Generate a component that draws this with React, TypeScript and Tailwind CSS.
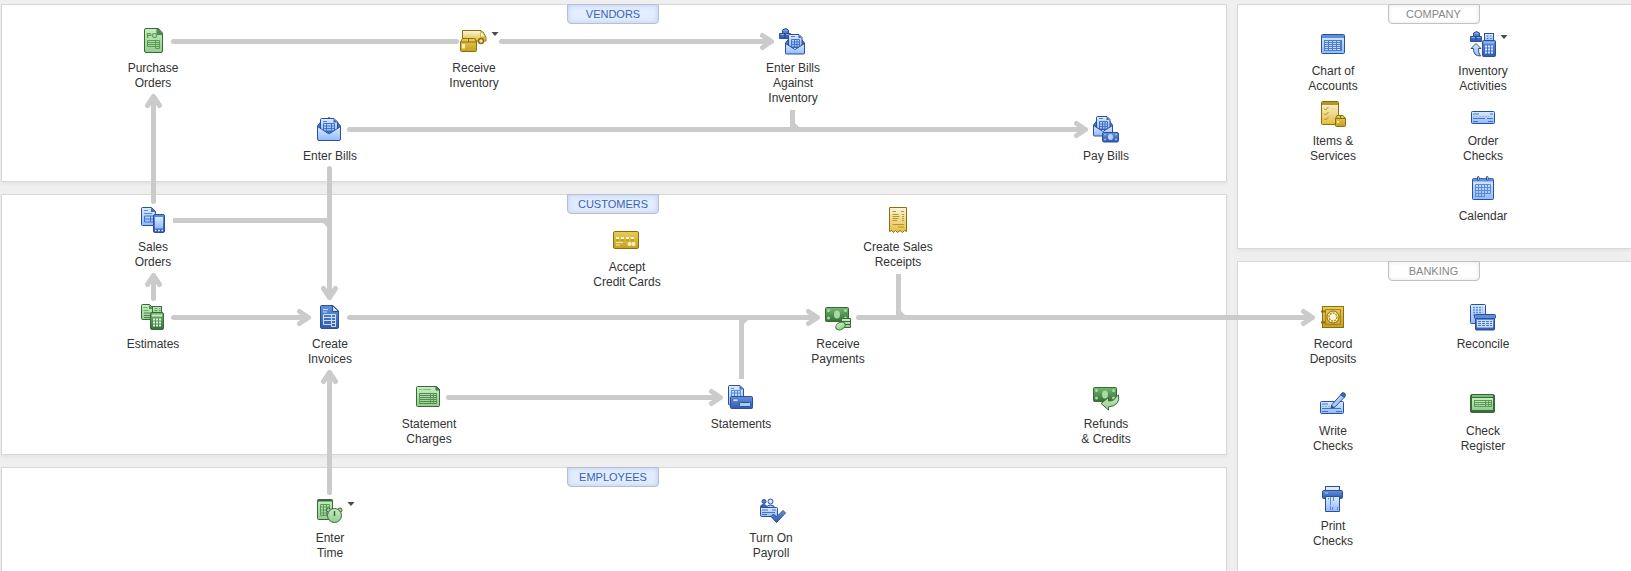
/**
 * @file Home page workflow board
 * @description Panels with task shortcuts and the arrows that join them
 */

import type { ReactNode } from 'react';
import { clsx } from 'clsx';

// outline colours of the three icon families
const BLUE = '#2f4f95';
const GREEN = '#3b683a';
const GOLD = '#8c6d0f';

/**
 * Shared gradients, referenced by id from every icon
 */
function IconGradients() {
  const gradients = [
    { id: 'blueLight', from: '#deebff', to: '#8fbaff' },
    { id: 'blueDark', from: '#5f93dc', to: '#3059b4' },
    { id: 'greenLight', from: '#c9edc4', to: '#93cc8e' },
    { id: 'greenDark', from: '#74b870', to: '#356f36' },
    { id: 'goldLight', from: '#fcf5da', to: '#e3bf3f' },
    { id: 'goldDark', from: '#e8cd58', to: '#c7a01f' },
  ];

  return (
    <defs>
      {gradients.map(({ id, from, to }) => (
        <linearGradient key={id} id={id} x1="0" y1="0" x2="0" y2="1">
          <stop offset="0" stopColor={from} />
          <stop offset="1" stopColor={to} />
        </linearGradient>
      ))}
    </defs>
  );
}

/* ---------- icons, all drawn on a 28 x 28 grid ---------- */

const purchaseOrders = (
  <g>
    <path d="M7 .5h12.5l4 4.5v18q0 1.5-1.5 1.5H7q-1.5 0-1.5-1.5V2Q5.5 .5 7 .5z" fill="url(#greenLight)" stroke={GREEN} />
    <path d="M17.5 1h2l4 4.5v1.5h-6z" fill="#4f8a4c" />
    <text x="7.5" y="10" fontSize="7.5" fontWeight="700" fill="#4d9249" fontFamily="Liberation Sans, Arial, sans-serif">PO</text>
    <path d="M8.5 12.5h12v8h-4v-2h-8zM8.5 14.5h12M8.5 16.5h12M16.5 12.5v6M16.5 18.500h4" fill="none" stroke="#5a9a56" />
  </g>
);

const receiveInventory = (
  <g>
    <path d="M2.5 2.5h18.5v1.5h2l3 5.5v3.5h-23.5z" fill="url(#goldLight)" stroke={GOLD} />
    <path d="M20 4.500h3l2.500 5v3h-5.500z" fill="#d9b634" />
    <path d="M21 5h1.500l1.500 3.500h-3z" fill="#fdf6dc" />
    <circle cx="21" cy="13" r="2.500" fill="#f5e7a8" stroke={GOLD} strokeWidth="1.500" />
    <path d="M2.5 10.500h12.500l1.500 3.500v8.500q0 1-1 1h-14q-1 0-1-1v-8.500z" fill="url(#goldDark)" stroke={GOLD} />
    <path d="M.5 14h16M8.500 10.500v3.500" fill="none" stroke={GOLD} />
    <rect x="2" y="16" width="3" height="4.500" fill="#f8edbf" />
  </g>
);

// open envelope with a bill inside; shared by the two small bill icons
const openEnvelope = (
  <g>
    <path d="M.5 9l3.5-4.5h12l3.5 4.5v3h-19z" fill="url(#blueDark)" stroke={BLUE} />
    <path d="M3.500 1.500q0-1 1-1h9.500l3 3v10h-13.500z" fill="url(#blueLight)" stroke={BLUE} />
    <path d="M13.5 .5l3 3.500h-3z" fill="#3c66b8" />
    <path d="M6 2.5h4" stroke="#4f7fd0" />
    <path d="M6.5 5.5h8v7.500h-8zM6.500 8h8M6.500 10.500h8M9.500 5.500v7.500M12 5.500v7.500" fill="none" stroke="#4373cb" />
    <path d="M.5 9.500l9.500 6 9.500-6v9.500q0 1-1 1h-17q-1 0-1-1z" fill="url(#blueLight)" stroke={BLUE} />
  </g>
);

const cubes = (
  <g>
    <path d="M3.500 2l3-1.500 3 1.500v3.500h-6zM.5 5.500h5.500v5h-5.500zM6 5.500h5.500v5h-5.500z" fill="url(#blueDark)" stroke={BLUE} />
    <path d="M4.500 2.500h4M1.500 6.500h3.500M7 6.500h3.500" stroke="#86aee8" />
  </g>
);

const enterBillsAgainst = (
  <g>
    {cubes}
    <g transform="translate(6 6)">{openEnvelope}</g>
  </g>
);

const enterBills = (
  <g>
    <path d="M1.5 10l4-5h15l4 5v4h-23z" fill="url(#blueDark)" stroke={BLUE} />
    <circle cx="13" cy="2.5" r="1.5" fill="#3c66b8" />
    <path d="M4.5 3.5q0-1 1-1h12.500l3.500 3.500v9.500h-17z" fill="url(#blueLight)" stroke={BLUE} />
    <path d="M17.5 2.5l3.500 4h-3.500z" fill="#3c66b8" />
    <path d="M7 5.5h4" stroke="#4f7fd0" />
    <path d="M7.5 7.5h11v9h-11zM7.500 10h11M7.500 12.500h11M7.500 15h11M10.500 7.500v9M15.500 7.500v9" fill="none" stroke="#4373cb" />
    <path d="M1.5 10.5l11.5 7.500 11.500-7.500v12.500q0 1.500-1.500 1.500h-20q-1.500 0-1.500-1.500z" fill="url(#blueLight)" stroke={BLUE} />
  </g>
);

const payBills = (
  <g>
    <g transform="translate(1 0)">{openEnvelope}</g>
    <rect x="10.5" y="16.5" width="16" height="9.5" rx="1.5" fill="url(#blueDark)" stroke={BLUE} />
    <ellipse cx="18.5" cy="21" rx="2.5" ry="3" fill="#b9d3ff" />
    <path d="M12 18.5h2M12 23.5h2M23 18.5h2M23 23.5h2" stroke="#8fb6f5" strokeWidth="1.5" />
  </g>
);

const salesOrders = (
  <g>
    <path d="M3.5 .5h9l4 4v14h-13q-1 0-1-1v-16q0-1 1-1z" fill="url(#blueLight)" stroke={BLUE} />
    <path d="M12 .5l4.5 4.5h-4.5z" fill="#3f6cc4" />
    <path d="M5 3.5h4M5 6.5h8" stroke="#5b8bd8" />
    <path d="M5.5 9h9v6h-9zM5.5 12h9M11.5 9v6" fill="none" stroke="#4373cb" />
    <rect x="14.5" y="7.5" width="11" height="18" rx="1.5" fill="url(#blueDark)" stroke={BLUE} />
    <rect x="16" y="10" width="8" height="11.5" fill="url(#blueLight)" />
    <path d="M16 23.5h1.5M19 23.5h2M22.5 23.5h1.5" stroke="#d4e4ff" strokeWidth="1.5" />
  </g>
);

const estimates = (
  <g>
    <path d="M3.5 .5h7l4 4v11h-11q-1 0-1-1v-13q0-1 1-1z" fill="url(#greenLight)" stroke={GREEN} />
    <path d="M10 1l4 4h-4z" fill="#4f8a4c" />
    <path d="M4.5 3.5h4M4.5 6.5h5" stroke="#6dac68" />
    <path d="M5 9h8v4.5h-8M5 11.5h6" fill="none" stroke="#4f8a4c" />
    <rect x="13.5" y="2.5" width="9" height="8" fill="url(#greenLight)" stroke={GREEN} />
    <path d="M15.5 4.5h3M20 4.5h1.5M15.5 6.5h3M20 6.5h1.5" stroke="#5a9a56" />
    <rect x="11.5" y="8.5" width="13" height="17" rx="1.5" fill="url(#greenDark)" stroke={GREEN} />
    <path d="M13 11.5h10" stroke="#c9edc4" strokeWidth="2" />
    <path d="M14 15.5h8M14 18.5h8M14 21.5h8" stroke="#e4f8e1" strokeWidth="2" strokeDasharray="2 1" />
  </g>
);

const createInvoices = (
  <g>
    <path d="M5.5 1.5h11.5l5.5 5.500v16q0 1.500-1.500 1.500h-15q-1.500 0-1.500-1.500v-20.500q0-1 1-1z" fill="url(#blueDark)" stroke={BLUE} />
    <path d="M16.5 1.5l6 6h-6z" fill="#d7e6ff" stroke={BLUE} />
    <path d="M7 5.5h5M7 8h4" stroke="#cfe0ff" />
    <path d="M7.500 10.500h12v12h-4v-2h-8zM7.500 13.500h12M7.500 16.500h12M15.500 10.500v10M15.500 19.500h4" fill="none" stroke="#cfe0ff" />
  </g>
);

const creditCard = (
  <g>
    <rect x=".5" y="4.5" width="25" height="17" rx="1.5" fill="url(#goldDark)" stroke={GOLD} />
    <path d="M3 11h18" stroke="#fff8dc" strokeWidth="2" strokeDasharray="3 2" />
    <path d="M3 13h18" stroke="#ad8a1c" strokeDasharray="3 2" />
    <path d="M3 15.5h7M3 18h4" stroke="#f6e9b0" />
    <circle cx="16.5" cy="17" r="2" fill="#fff3c8" />
    <circle cx="20.5" cy="17" r="2" fill="#fff3c8" />
  </g>
);

const salesReceipts = (
  <g>
    <path d="M5.5 .5h17v24l-2-1-2 2-2.500-2-2.500 2-2-2-2 2-2-2-2 1z" fill="url(#goldLight)" stroke={GOLD} />
    <path d="M8.5 4.5h3.500M17 4.5h3M8.5 7.5h6M8.5 9.5h7M8.5 11.500h6M8.5 13.5h4.500M8.500 17.500h11.500M14 20h6" stroke="#b8952a" />
    <path d="M19 7v7" stroke="#b8952a" strokeDasharray="1 1" strokeWidth="2" />
  </g>
);

const banknote = (
  <g>
    <rect x="1.5" y="3.5" width="23" height="14" rx="1" fill="url(#greenDark)" stroke={GREEN} />
    <ellipse cx="13" cy="10.500" rx="3" ry="4" fill="#a6dba2" />
    <g fill="#a6dba2">
      <circle cx="4.5" cy="6.5" r="1.5" />
      <circle cx="21.5" cy="6.5" r="1.5" />
      <circle cx="4.5" cy="14" r="1.5" />
      <circle cx="21.5" cy="14" r="1.5" />
    </g>
  </g>
);

const receivePayments = (
  <g>
    {banknote}
    <path d="M17.5 14.5h9v9h-9z" fill="url(#greenLight)" stroke={GREEN} />
    <path d="M17.5 17.5h9M17.5 20.5h9" stroke={GREEN} />
    <ellipse cx="16.5" cy="22" rx="5" ry="3.500" transform="rotate(-28 16.5 22)" fill="url(#greenLight)" stroke={GREEN} />
  </g>
);

const statementCharges = (
  <g>
    <path d="M2.5 2.5h19l3 3v16q0 1-1 1h-21q-1 0-1-1v-18q0-1 1-1z" fill="url(#greenLight)" stroke={GREEN} />
    <path d="M21 2.5v3.5h3.500z" fill="#4f8a4c" stroke={GREEN} />
    <path d="M4 5.5h3M8 5.5h8" stroke="#7fbd7a" />
    <path d="M4 9.5h18M4 11.5h18M4 13.5h18M4 15.5h18M4 17.5h18M4 19.5h18" stroke="#4f8a4c" />
    <path d="M4.5 9v11M15.5 9v11M18.5 9v11M21.5 9v11" stroke="#5a9a56" />
  </g>
);

const statements = (
  <g>
    <path d="M2.5 1.5h10.500l3.500 3.500v16h-14q-1 0-1-1v-17.500q0-1 1-1z" fill="url(#blueLight)" stroke={BLUE} />
    <path d="M12.5 1.5l4 4h-4z" fill="#3f6cc4" />
    <path d="M4 4.5h3" stroke="#5b8bd8" />
    <path d="M4.5 6.5h9v6h-9zM4.5 9h9M7.5 6.5v6M10.5 6.5v6" fill="none" stroke="#5b8bd8" />
    <rect x="3.5" y="12.5" width="22" height="12" rx="1" fill="url(#blueDark)" stroke={BLUE} />
    <rect x="6" y="15" width="5" height="2.5" fill="#cfe0ff" stroke={BLUE} strokeWidth=".5" />
    <rect x="12.5" y="18.5" width="11" height="4" rx="1" fill="#a9caff" stroke={BLUE} />
  </g>
);

const refunds = (
  <g>
    {banknote}
    <path d="M26.500 11q2 10.500-10 12v3l-7.500-6.500 7.500-6v3.500q6 0 7.500-4z" fill="url(#greenLight)" stroke={GREEN} strokeLinejoin="round" />
  </g>
);

const enterTime = (
  <g>
    <rect x="1.5" y="1.5" width="15" height="20" rx="1" fill="url(#greenLight)" stroke={GREEN} />
    <path d="M1.5 2.5h15" stroke={GREEN} strokeWidth="2" />
    <path d="M4.5 6.5h9v11h-9zM4.5 9h9M4.5 12h9M4.5 15h9M7.5 6.5v11M10.5 6.5v11" fill="none" stroke="#5a9a56" />
    <circle cx="12.5" cy="12" r="2" fill="#a6dba2" stroke={GREEN} />
    <circle cx="24" cy="12" r="2" fill="#a6dba2" stroke={GREEN} />
    <circle cx="18.5" cy="17.5" r="7" fill="url(#greenLight)" stroke={GREEN} />
    <path d="M18.5 13v5" stroke={GREEN} strokeWidth="1.5" />
  </g>
);

const turnOnPayroll = (
  <g>
    <path d="M3.5 11v-2q0-2.500 3-2.500t3 2.500v2z" fill="#3c66b8" stroke={BLUE} />
    <circle cx="7" cy="3.5" r="2" fill="#4f7fd0" stroke={BLUE} />
    <path d="M9 10.5q.5-3.500 4.500-3.500t4.500 3.500z" fill="#a9caff" stroke={BLUE} />
    <circle cx="13.5" cy="3.5" r="2.5" fill="#d7e6ff" stroke={BLUE} />
    <rect x="3.5" y="9.5" width="17" height="9" rx="1" fill="url(#blueLight)" stroke={BLUE} />
    <path d="M5 12h6M15 12h4M5 14.5h13M5 16.5h5" stroke="#4373cb" />
    <path d="M14 18.5l2.500-2.500 3 3 6.500-6.500 2.500 2.500-9 9.500z" fill="url(#blueDark)" stroke={BLUE} strokeLinejoin="round" />
  </g>
);

const chartOfAccounts = (
  <g>
    <rect x="2.5" y="3.5" width="23" height="19" rx="1" fill="url(#blueLight)" stroke={BLUE} />
    <path d="M3 5.5h22" stroke="#5f8fda" strokeWidth="3" />
    <rect x="5" y="9" width="18" height="11" fill="#4b7bd0" />
    <path d="M6 10.5h16M6 12.5h16M6 14.5h16M6 16.5h16M6 18.5h16" stroke="#c6dcff" strokeDasharray="3 1" />
  </g>
);

const inventoryActivities = (
  <g>
    <g transform="translate(1 0)">{cubes}</g>
    <rect x="15.5" y="2.5" width="9" height="9" fill="url(#blueLight)" stroke={BLUE} />
    <path d="M17.5 5h2M21 5h1.5M17.5 7.5h2M21 7.5h1.5" stroke="#4373cb" />
    <path d="M2 17.5l5-5 5 5h-2.500q-.5 4 2 7.500-7.500 0-7-7.500z" fill="url(#blueLight)" stroke={BLUE} strokeLinejoin="round" />
    <rect x="13.5" y="9.5" width="13" height="16" rx="1" fill="url(#blueDark)" stroke={BLUE} />
    <path d="M15 11.5h10" stroke="#8fb6f5" strokeWidth="2" />
    <path d="M16 15.5h8M16 18.5h8M16 21.5h8" stroke="#d7e6ff" strokeWidth="2" strokeDasharray="2 1" />
  </g>
);

const itemsServices = (
  <g>
    <rect x="2.5" y=".5" width="17" height="23" rx="1" fill="url(#goldLight)" stroke={GOLD} />
    <path d="M3 2.5h16" stroke="#b8952a" strokeWidth="3" />
    <path d="M5 7.5l1.500 1.500 3-3M5 12.500l1.500 1.500 3-3M5 17.500l1.500 1.500 3-3" fill="none" stroke="#a8851c" />
    <path d="M12.5 7.5h4M12.5 12.5h4" stroke="#ecdc9c" />
    <path d="M18 14.5h6l2.500 3v7q0 1-1 1h-8q-1 0-1-1v-7z" fill="url(#goldDark)" stroke={GOLD} />
    <path d="M16.5 17.5h10M21.5 14.5v3" stroke={GOLD} />
    <path d="M18 21h2" stroke="#f8edbf" strokeWidth="2" />
  </g>
);

const orderChecks = (
  <g>
    <rect x="2.5" y="10.5" width="23" height="12" rx="1" fill="url(#blueLight)" stroke={BLUE} />
    <path d="M4 13h6M21 13h3M4 17.5h12M18 17.5h6M4 20.5h5M19 20.5h5" stroke="#4373cb" />
    <path d="M4 15.5h16" stroke="#8fb3ec" strokeDasharray="2 1" />
  </g>
);

const calendar = (
  <g>
    <rect x="3.5" y="2.5" width="21" height="21" rx="1" fill="url(#blueLight)" stroke={BLUE} />
    <path d="M4 4h20" stroke="#5f8fda" strokeWidth="3" />
    <rect x="8.5" y=".5" width="1.5" height="4" rx=".5" fill="#fff" stroke={BLUE} />
    <rect x="17.5" y=".5" width="1.5" height="4" rx=".5" fill="#fff" stroke={BLUE} />
    <path d="M6.5 8.5h15v9h-6v3h-9zM6.5 11.5h15M6.5 14.5h15M6.5 17.5h9M9.5 8.5v12M12.5 8.5v12M15.5 8.5v12M18.5 8.5v9" fill="none" stroke="#5b8bd8" />
  </g>
);

const recordDeposits = (
  <g>
    <rect x="3.5" y="2.5" width="21" height="21" fill="url(#goldDark)" stroke={GOLD} />
    <rect x="6.5" y="5.5" width="15" height="15" fill="none" stroke="#a8851c" />
    <path d="M2 7.5h4.500M2 18.5h4.500" stroke={GOLD} strokeWidth="2" />
    <circle cx="14" cy="13" r="6" fill="#f8edbf" stroke={GOLD} />
    <circle cx="14" cy="13" r="4" fill="none" stroke="#b8952a" strokeWidth="1.5" strokeDasharray="2 1" />
    <circle cx="14" cy="13" r="2.5" fill="#fffbea" />
  </g>
);

const reconcile = (
  <g>
    <rect x="1.5" y=".5" width="15" height="19" rx="1" fill="url(#blueLight)" stroke={BLUE} />
    <path d="M4 3.5h9.500M4 6h9.500M4 8.500h9.500M4 11h9.500" stroke="#5b8bd8" strokeWidth="1.5" strokeDasharray="2 1" />
    <path d="M6.500 14.500h19v10.500q0 1-1 1h-17q-1 0-1-1z" fill="url(#blueDark)" stroke={BLUE} />
    <rect x="5.5" y="10.5" width="21" height="4" rx="1" fill="#5f8fda" stroke={BLUE} />
    <rect x="8" y="16" width="16" height="7.500" fill="#cfe0ff" />
    <path d="M9 17.500h14M9 19.500h14M9 21.500h14" stroke="#4373cb" strokeDasharray="3 1" />
  </g>
);

const writeChecks = (
  <g>
    <rect x="1.5" y="10.5" width="23" height="12" rx="1" fill="url(#blueLight)" stroke={BLUE} />
    <path d="M3 13h6M3 17.5h19M3 20.5h6M17 20.5h6" stroke="#4373cb" />
    <path d="M3 15.5h12" stroke="#8fb3ec" strokeDasharray="2 1" />
    <path d="M13 13.5l9-10 3 3-9 9.500-4 1z" fill="#a9caff" stroke={BLUE} strokeLinejoin="round" />
    <path d="M21.5 3.5q2-3 4-1.500t0 4.500z" fill="#3f6cc4" stroke={BLUE} />
    <path d="M12.5 14l3 2.500-3.500 1z" fill={BLUE} />
  </g>
);

const checkRegister = (
  <g>
    <rect x="1.5" y="3.5" width="24" height="18" rx="1.5" fill="#356f36" stroke={GREEN} />
    <path d="M3 5h21" stroke="#7cc078" strokeWidth="2" />
    <rect x="3" y="7" width="21" height="12" fill="url(#greenLight)" />
    <path d="M5 9.5h18M5 11.5h18M5 13.5h18M5 15.500h18" stroke="#5a9a56" />
    <path d="M5.5 9v7M16.5 9v7M19.5 9v7M22.5 9v7" stroke="#5a9a56" />
  </g>
);

const printChecks = (
  <g>
    <rect x="6.5" y=".5" width="14" height="6" fill="#dfeaff" stroke={BLUE} />
    <rect x="3.5" y="4.5" width="20" height="8" rx="1" fill="url(#blueDark)" stroke={BLUE} />
    <path d="M6 7h3" stroke="#a9caff" />
    <path d="M6.5 10.5h14v15h-14z" fill="url(#blueLight)" stroke={BLUE} />
    <path d="M9.5 12v1.500M11.5 11v8M14.5 11v4M11.5 20v4M13.5 21v3M18.5 21v3" stroke="#5b8bd8" />
  </g>
);

/* ---------- building blocks ---------- */

interface TaskProps {
  icon: ReactNode;
  label: string;
  /** Shows the small drop-down triangle beside the icon */
  menu?: boolean;
  className?: string;
}

/**
 * Task shortcut: icon above a centred label
 */
function Task({ icon, label, menu, className }: TaskProps) {
  return (
    <button type="button" className={clsx('flex w-20 cursor-pointer flex-col items-center gap-[5px]', className)}>
      <svg viewBox="0 0 28 28" aria-hidden="true" className="h-7 w-7 shrink-0 overflow-visible">
        {icon}
        {menu && <path d="M31.500 4h7l-3.500 4z" fill="#4a4a4a" />}
      </svg>
      <span className="text-xs leading-[15px] whitespace-pre text-[#333333]">{label}</span>
    </button>
  );
}

interface PanelProps {
  title: string;
  muted?: boolean;
  className?: string;
  children: ReactNode;
}

/**
 * White panel with its title tab hanging from the top edge
 */
function Panel({ title, muted, className, children }: PanelProps) {
  const tab = '-mt-px mx-auto block h-5 w-[92px] rounded-b border text-center text-[11px] leading-[19px]';

  return (
    <section className={clsx('relative border border-[#d8d8d8] bg-white pr-0.5 shadow-[0_2px_3px_rgba(0,0,0,0.05)]', className)}>
      {muted ? (
        <h2 className={clsx(tab, 'border-[#c2c2c2] bg-white text-[#878787] shadow-[inset_0_0_4px_rgba(0,0,0,0.10)]')}>{title}</h2>
      ) : (
        <button type="button" className={clsx(tab, 'cursor-pointer border-[#b9bfcc] bg-[#e2edff] text-[#3a5fc0] shadow-[inset_0_0_5px_rgba(70,110,190,0.25)]')}>
          {title}
        </button>
      )}
      {children}
    </section>
  );
}

/** Arrow head with its tip at the origin, pointing right */
function ArrowHead({ transform }: { transform?: string }) {
  return <path d="M-12 -6L-3 0L-12 6M-9 0H-3" transform={transform} />;
}

/**
 * Arrows between the tasks, laid over the panels of the workflow column
 */
function Connectors() {
  return (
    <svg aria-hidden="true" className="pointer-events-none absolute inset-0 z-10 h-full w-full overflow-visible">
      <IconGradients />
      <g fill="none" stroke="#cbcbcb" strokeWidth="5" strokeLinecap="round" strokeLinejoin="round">
        {/* vendors */}
        <path d="M172.5 37.5H455.5M500.5 37.5H768" />
        <ArrowHead transform="translate(773.5 37.5)" />
        <path d="M348.5 125.5H1082" />
        <ArrowHead transform="translate(1087.5 125.5)" />
        <path d="M791.5 106v17" strokeLinecap="butt" />

        {/* sales orders, estimates and invoices */}
        <path d="M152.5 197.5V96" />
        <ArrowHead transform="translate(152.5 89.5) rotate(-90)" />
        <path d="M152.5 294.5V275" />
        <ArrowHead transform="translate(152.5 268.5) rotate(-90)" />
        <path d="M328.5 164.5V290" />
        <ArrowHead transform="translate(328.5 296.5) rotate(90)" />
        <path d="M172 216.5H328" strokeLinecap="butt" />
        <path d="M172.5 313.5H304" />
        <ArrowHead transform="translate(310.5 313.5)" />
        <path d="M328.5 488.5V372" />
        <ArrowHead transform="translate(328.5 365.5) rotate(-90)" />

        {/* payments */}
        <path d="M348.5 313.5H813" />
        <ArrowHead transform="translate(819.5 313.5)" />
        <path d="M447.5 393.5H716" />
        <ArrowHead transform="translate(722.5 393.5)" />
        <path d="M740.5 375V314M897.5 270v43" strokeLinecap="butt" />

        {/* deposits: runs past the column into the banking panel */}
        <line x1="857.5" y1="313.5" x2="100%" y2="313.5" />
        <svg x="100%" y="313.5" className="overflow-visible">
          <path d="M0 0H82" />
          <ArrowHead transform="translate(88.5 0)" />
        </svg>
      </g>

      {/* rounded corners where a branch joins a line */}
      <path d="M794 119v4h4zM900 307v4h4zM743 320v-4h4zM326 223v-4h-4z" fill="#cbcbcb" />
    </svg>
  );
}

export default function App() {
  return (
    <main className="flex min-h-screen gap-2.5 overflow-hidden bg-[#efefef] pt-1 pl-px font-['Liberation_Sans',Arial,sans-serif]">
      {/* workflow column */}
      <div className="relative z-10 flex min-w-0 flex-1 flex-col gap-3">
        <Panel title="VENDORS" className="min-h-[178px]">
          <Task icon={purchaseOrders} label={'Purchase\nOrders'} className="absolute top-[23px] left-[111px]" />
          <Task icon={receiveInventory} label={'Receive\nInventory'} menu className="absolute top-[23px] left-[432px]" />
          <Task icon={enterBillsAgainst} label={'Enter Bills\nAgainst\nInventory'} className="absolute top-[23px] left-[751px]" />
          <Task icon={enterBills} label="Enter Bills" className="absolute top-[111px] left-[288px]" />
          <Task icon={payBills} label="Pay Bills" className="absolute top-[111px] left-[1064px]" />
        </Panel>

        <Panel title="CUSTOMERS" className="min-h-[261px]">
          <Task icon={salesOrders} label={'Sales\nOrders'} className="absolute top-[12px] left-[111px]" />
          <Task icon={estimates} label="Estimates" className="absolute top-[109px] left-[111px]" />
          <Task icon={createInvoices} label={'Create\nInvoices'} className="absolute top-[109px] left-[288px]" />
          <Task icon={creditCard} label={'Accept\nCredit Cards'} className="absolute top-[32px] left-[585px]" />
          <Task icon={salesReceipts} label={'Create Sales\nReceipts'} className="absolute top-[12px] left-[856px]" />
          <Task icon={receivePayments} label={'Receive\nPayments'} className="absolute top-[109px] left-[796px]" />
          <Task icon={statementCharges} label={'Statement\nCharges'} className="absolute top-[189px] left-[387px]" />
          <Task icon={statements} label="Statements" className="absolute top-[189px] left-[699px]" />
          <Task icon={refunds} label={'Refunds\n& Credits'} className="absolute top-[189px] left-[1064px]" />
        </Panel>

        <Panel title="EMPLOYEES" className="min-h-[104px] flex-1 border-b-0">
          <Task icon={enterTime} label={'Enter\nTime'} menu className="absolute top-[30px] left-[288px]" />
          <Task icon={turnOnPayroll} label={'Turn On\nPayroll'} className="absolute top-[30px] left-[729px]" />
        </Panel>

        <Connectors />
      </div>

      {/* side column */}
      <div className="flex w-[394px] shrink-0 flex-col gap-3">
        <Panel title="COMPANY" muted className="border-r-0">
          <div className="grid grid-cols-[150px_150px] grid-rows-[70px_75px_auto] items-start justify-items-center pt-[7px] pb-6 pl-5">
            <Task icon={chartOfAccounts} label={'Chart of\nAccounts'} />
            <Task icon={inventoryActivities} label={'Inventory\nActivities'} menu />
            <Task icon={itemsServices} label={'Items &\nServices'} />
            <Task icon={orderChecks} label={'Order\nChecks'} />
            <Task icon={calendar} label="Calendar" className="col-start-2" />
          </div>
        </Panel>

        <Panel title="BANKING" muted className="flex-1 border-r-0 border-b-0">
          <div className="grid grid-cols-[150px_150px] grid-rows-[87px_95px_auto] items-start justify-items-center pt-[23px] pl-5">
            <Task icon={recordDeposits} label={'Record\nDeposits'} />
            <Task icon={reconcile} label="Reconcile" />
            <Task icon={writeChecks} label={'Write\nChecks'} />
            <Task icon={checkRegister} label={'Check\nRegister'} />
            <Task icon={printChecks} label={'Print\nChecks'} />
          </div>
        </Panel>
      </div>
    </main>
  );
}
